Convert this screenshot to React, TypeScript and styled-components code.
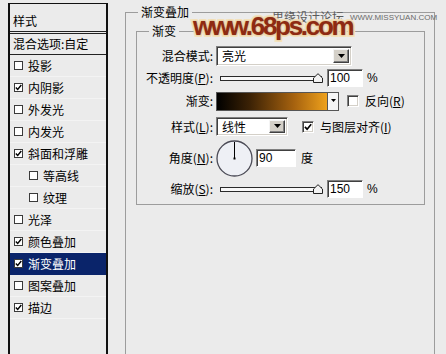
import React from 'react';
import styled, { createGlobalStyle } from 'styled-components';

const Global = createGlobalStyle`
  html, body { margin: 0; padding: 0; background: #ebebeb; }
  body {
    font-family: "Noto Sans CJK SC", "Noto Sans", sans-serif;
    font-size: 12px;
    color: #000;
    overflow: hidden;
  }
`;

const Page = styled.div`
  position: relative;
  width: 446px;
  height: 354px;
  overflow: hidden;
  box-sizing: border-box;
  padding: 3px 0 0 8px;
  display: flex;
  align-items: flex-start;
`;

/* ---------- left style list ---------- */
const StyleList = styled.div`
  flex-shrink: 0;
  width: 100px;
  height: 380px;
  box-sizing: border-box;
  border: 1px solid #111;
  border-left-width: 2px;
  border-right-width: 2px;
  display: flex;
  flex-direction: column;
`;

const ListHeader = styled.div`
  height: 28px;
  box-sizing: border-box;
  padding: 10px 0 0 3px;
  line-height: 14px;
  border-bottom: 1px solid #222;
`;

const BlendRow = styled.div`
  margin-top: 1px;
  height: 22px;
  box-sizing: border-box;
  border-top: 1px solid #222;
  border-bottom: 1px solid #222;
  padding-left: 3px;
  line-height: 20px;
`;

const ItemRow = styled.div<{ $indent: boolean; $selected: boolean }>`
  height: 22px;
  box-sizing: border-box;
  display: flex;
  align-items: center;
  gap: 5px;
  padding-left: ${(p) => (p.$indent ? 19 : 4)}px;
  line-height: 14px;
  background: ${(p) => (p.$selected ? '#0a246a' : 'transparent')};
  color: ${(p) => (p.$selected ? '#fff' : '#000')};
  border-bottom: 1px solid ${(p) => (p.$selected ? '#0a246a' : '#f3f3f3')};
`;

const SmallBox = styled.span`
  width: 9px;
  height: 9px;
  box-sizing: border-box;
  border: 1px solid #3a3a3a;
  background: #fff;
  display: inline-flex;
  align-items: center;
  justify-content: center;
  flex-shrink: 0;
`;

/* ---------- right groups ---------- */
const OuterGroup = styled.fieldset`
  margin: 2px 0 0 17px;
  width: 310px;
  height: 400px;
  box-sizing: border-box;
  border: 1px solid #9c9c9c;
  padding: 5px 10px 0 10px;
  min-width: 0;
`;

const InnerGroup = styled.fieldset`
  margin: 0;
  width: 289px;
  box-sizing: border-box;
  border: 1px solid #9c9c9c;
  padding: 7px 0 2px 0;
  min-width: 0;
`;

const GroupTitle = styled.legend<{ $ml: number }>`
  margin-left: ${(p) => p.$ml}px;
  padding: 0 3px;
  line-height: 14px;
  font-size: 12px;
`;

const FormRow = styled.div<{ $h: number }>`
  height: ${(p) => p.$h}px;
  display: flex;
  align-items: center;
`;

const Label = styled.span`
  width: 76px;
  text-align: right;
  margin-right: 3px;
  line-height: 14px;
  white-space: nowrap;
  flex-shrink: 0;
`;

const Select = styled.div<{ $w: number; $h: number }>`
  width: ${(p) => p.$w}px;
  height: ${(p) => p.$h}px;
  box-sizing: border-box;
  border: 1px solid;
  border-color: #808080 #fff #fff #808080;
  box-shadow: inset 1px 1px 0 #404040, inset -1px -1px 0 #d4d0c8;
  background: #fff;
  display: flex;
  align-items: center;
  padding: 2px;
`;

const SelectText = styled.span`
  flex: 1;
  padding-left: 3px;
  line-height: 14px;
`;

const DropButton = styled.span`
  width: 16px;
  align-self: stretch;
  box-sizing: border-box;
  background: #d4d0c8;
  border: 1px solid;
  border-color: #f4f4f4 #404040 #404040 #f4f4f4;
  box-shadow: inset -1px -1px 0 #808080;
  display: flex;
  align-items: center;
  justify-content: center;
`;

const SliderWrap = styled.div`
  position: relative;
  margin-left: 4px;
  width: 102px;
  height: 10px;
  display: flex;
  align-items: center;
`;

const Track = styled.div`
  width: 102px;
  height: 5px;
  box-sizing: border-box;
  border: 1px solid #2a2a2a;
  background: #f8f8f8;
`;

const Thumb = styled.svg`
  position: absolute;
  top: 0;
`;

const NumBox = styled.div<{ $w: number }>`
  width: ${(p) => p.$w}px;
  height: 18px;
  box-sizing: border-box;
  border: 1px solid;
  border-color: #808080 #fff #fff #808080;
  box-shadow: inset 1px 1px 0 #404040;
  background: #fff;
  padding-left: 2px;
  line-height: 16px;
  font-family: "Liberation Sans", Arial, sans-serif;
  font-size: 12px;
`;

const Unit = styled.span`
  margin-left: 4px;
  line-height: 14px;
  font-family: "Liberation Sans", Arial, sans-serif;
`;

const GradientBar = styled.div`
  width: 111px;
  height: 19px;
  box-sizing: border-box;
  border: 1px solid #555;
  border-right: none;
  background: linear-gradient(to right, #000 0%, #3c2205 30%, #a6620f 70%, #eea11c 100%);
`;

const GradientArrow = styled.span`
  width: 12px;
  height: 19px;
  box-sizing: border-box;
  border: 1px solid #555;
  background: #f6f6f6;
  display: flex;
  align-items: center;
  justify-content: center;
`;

const BigBox = styled.span<{ $ml: number }>`
  margin-left: ${(p) => p.$ml}px;
  width: 12px;
  height: 12px;
  box-sizing: border-box;
  border: 1px solid;
  border-color: #808080 #fff #fff #808080;
  box-shadow: inset 1px 1px 0 #404040, inset -1px -1px 0 #d4d0c8;
  background: #fff;
  display: inline-flex;
  align-items: center;
  justify-content: center;
  flex-shrink: 0;
`;

const OptText = styled.span`
  margin-left: 6px;
  line-height: 14px;
  white-space: nowrap;
`;

const Dial = styled.svg`
  flex-shrink: 0;
`;

/* ---------- watermarks (overlaying the screenshot) ---------- */
const Watermark = styled.div`
  position: absolute;
  left: 193px;
  top: 13px;
  font-family: "Liberation Sans", Arial, sans-serif;
  font-weight: bold;
  font-size: 26px;
  line-height: 26px;
  letter-spacing: -2.3px;
  color: #8e2a12;
  -webkit-text-stroke: 4px #f5e4bd;
  paint-order: stroke fill;
  text-shadow: 0 0 2px rgba(140, 70, 20, 0.45);
  white-space: nowrap;
`;

const SiteMark = styled.div`
  position: absolute;
  left: 272px;
  top: 8px;
  display: flex;
  align-items: center;
  gap: 6px;
  color: #5a5a5a;
  font-size: 12px;
  line-height: 14px;
  white-space: nowrap;
`;

const SiteUrl = styled.span`
  font-family: "Liberation Sans", Arial, sans-serif;
  font-size: 8px;
  color: #6a6a6a;
  padding-top: 3px;
`;

const Check = ({ size = 7 }: { size?: number }) => (
  <svg width={size} height={size} viewBox="0 0 7 7">
    <path d="M0.8 3.4 L2.7 5.4 L6.3 1" fill="none" stroke="#000" strokeWidth="1.4" />
  </svg>
);

const DownTri = ({ w = 7 }: { w?: number }) => (
  <svg width={w} height={Math.ceil(w / 2) + 1} viewBox={`0 0 ${w} ${Math.ceil(w / 2) + 1}`}>
    <polygon points={`0,0 ${w},0 ${w / 2},${Math.ceil(w / 2)}`} fill="#000" />
  </svg>
);

const SliderThumb = ({ left }: { left: number }) => (
  <Thumb width="10" height="10" viewBox="0 0 10 10" style={{ left }}>
    <polygon points="0.5,9.5 0.5,5 5,0.7 9.5,5 9.5,9.5" fill="#f2f2f2" stroke="#222" strokeWidth="1" />
  </Thumb>
);

const items = [
  { label: '投影', checked: false },
  { label: '内阴影', checked: true },
  { label: '外发光', checked: false },
  { label: '内发光', checked: false },
  { label: '斜面和浮雕', checked: true },
  { label: '等高线', checked: false, indent: true },
  { label: '纹理', checked: false, indent: true },
  { label: '光泽', checked: false },
  { label: '颜色叠加', checked: true },
  { label: '渐变叠加', checked: true, selected: true },
  { label: '图案叠加', checked: false },
  { label: '描边', checked: true },
];

export default function App() {
  return (
    <>
      <Global />
      <Page>
        <StyleList>
          <ListHeader>样式</ListHeader>
          <BlendRow>混合选项:自定</BlendRow>
          {items.map((it) => (
            <ItemRow key={it.label} $indent={!!it.indent} $selected={!!it.selected}>
              <SmallBox>{it.checked && <Check />}</SmallBox>
              <span>{it.label}</span>
            </ItemRow>
          ))}
        </StyleList>

        <OuterGroup>
          <GroupTitle $ml={2}>渐变叠加</GroupTitle>
          <InnerGroup>
            <GroupTitle $ml={12}>渐变</GroupTitle>

            <FormRow $h={22}>
              <Label>混合模式:</Label>
              <Select $w={136} $h={20}>
                <SelectText>亮光</SelectText>
                <DropButton>
                  <DownTri />
                </DropButton>
              </Select>
            </FormRow>

            <FormRow $h={22}>
              <Label>
                不透明度(<u>P</u>):
              </Label>
              <SliderWrap>
                <Track />
                <SliderThumb left={93} />
              </SliderWrap>
              <NumBox $w={36} style={{ marginLeft: 5 }}>100</NumBox>
              <Unit>%</Unit>
            </FormRow>

            <FormRow $h={24}>
              <Label>渐变:</Label>
              <GradientBar />
              <GradientArrow>
                <DownTri w={5} />
              </GradientArrow>
              <BigBox $ml={8} />
              <OptText>
                反向(<u>R</u>)
              </OptText>
            </FormRow>

            <FormRow $h={27}>
              <Label>
                样式(<u>L</u>):
              </Label>
              <Select $w={72} $h={19}>
                <SelectText>线性</SelectText>
                <DropButton>
                  <DownTri />
                </DropButton>
              </Select>
              <BigBox $ml={14}>
                <Check size={8} />
              </BigBox>
              <OptText>
                与图层对齐(<u>I</u>)
              </OptText>
            </FormRow>

            <FormRow $h={36}>
              <Label>
                角度(<u>N</u>):
              </Label>
              <Dial width="37" height="37" viewBox="0 0 37 37">
                <circle cx="18.5" cy="18.5" r="17.5" fill="#eef0f5" stroke="#4a4a55" strokeWidth="1.3" />
                <line x1="18.5" y1="18.5" x2="18.5" y2="2" stroke="#000" strokeWidth="1" />
                <rect x="17.5" y="17.5" width="2" height="2" fill="#000" />
              </Dial>
              <NumBox $w={40} style={{ marginLeft: 3 }}>90</NumBox>
              <OptText style={{ marginLeft: 5 }}>度</OptText>
            </FormRow>

            <FormRow $h={26}>
              <Label>
                缩放(<u>S</u>):
              </Label>
              <SliderWrap>
                <Track />
                <SliderThumb left={93} />
              </SliderWrap>
              <NumBox $w={36} style={{ marginLeft: 5 }}>150</NumBox>
              <Unit>%</Unit>
            </FormRow>
          </InnerGroup>
        </OuterGroup>

        <SiteMark>
          思缘设计论坛<SiteUrl>WWW.MISSYUAN.COM</SiteUrl>
        </SiteMark>
        <Watermark>www.68ps.com</Watermark>
      </Page>
    </>
  );
}
